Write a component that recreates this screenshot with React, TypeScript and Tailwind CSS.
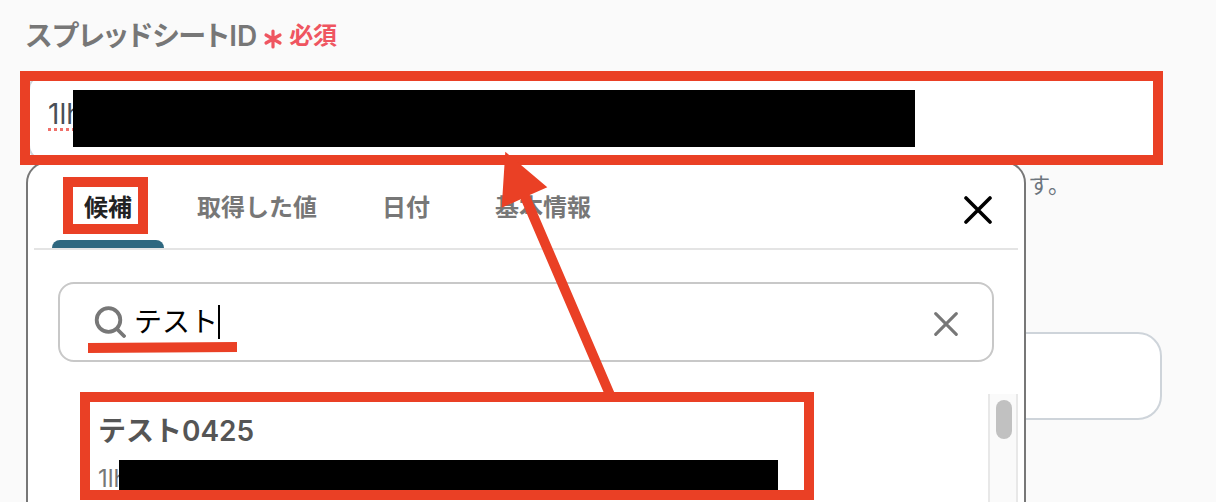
import { useState } from "react";

const tabs = ["候補", "取得した値", "日付", "基本情報"];

function Asterisk() {
  return (
    <svg className="mt-1.5 h-5 w-5 text-[#ef5560]" viewBox="0 0 20 20" aria-hidden="true">
      <path
        d="M10 2v16M3 6l14 8M17 6L3 14"
        fill="none"
        stroke="currentColor"
        strokeWidth="3.2"
        strokeLinecap="round"
      />
    </svg>
  );
}

function Cross({ className }: { className: string }) {
  return (
    <svg className={className} viewBox="0 0 28 28" aria-hidden="true">
      <path d="M2 2l24 24M26 2L2 26" fill="none" stroke="currentColor" strokeWidth="3.6" strokeLinecap="round" />
    </svg>
  );
}

function SearchIcon() {
  return (
    <svg className="h-8 w-8 shrink-0 text-[#777777]" viewBox="0 0 32 32" aria-hidden="true">
      <circle cx="14.5" cy="14" r="11.8" fill="none" stroke="currentColor" strokeWidth="3.8" />
      <path d="M23 23l7 7" stroke="currentColor" strokeWidth="3.8" strokeLinecap="round" />
    </svg>
  );
}

function Highlight({ className }: { className: string }) {
  return <div className={`pointer-events-none absolute border-[10px] border-[#ea4025] ${className}`} />;
}

function SuggestionPanel() {
  const [active, setActive] = useState(0);
  const [query, setQuery] = useState("テスト");

  return (
    <div className="absolute top-full right-[136px] -left-0.5 h-[420px] rounded-t-[22px] border-2 border-[#777777] bg-white">
      <div className="mx-1.5 flex h-[87px] items-stretch border-b-2 border-[#e4e4e4]">
        <div role="tablist" className="flex gap-px pl-[18px]">
          {tabs.map((tab, i) => (
            <button
              key={tab}
              type="button"
              role="tab"
              aria-selected={i === active}
              onClick={() => setActive(i)}
              className={`relative px-8 pt-1 text-2xl font-semibold whitespace-nowrap ${
                i === active ? "text-[#222222]" : "text-[#777777]"
              }`}
            >
              {tab}
              {i === active && <span className="absolute inset-x-0 bottom-0 h-2 rounded-t-lg bg-[#2f6880]" />}
              {i === 0 && <Highlight className="top-[14px] right-4 left-[11px] h-[57px]" />}
            </button>
          ))}
        </div>
        <button type="button" aria-label="閉じる" className="mt-2 mr-[26px] ml-auto text-black">
          <Cross className="h-7 w-7" />
        </button>
      </div>

      <div className="relative mx-[30px] mt-8 flex h-20 items-center rounded-2xl border-2 border-[#c8c8c8] pr-8 pl-[34px]">
        <SearchIcon />
        <input
          type="text"
          aria-label="候補を検索"
          value={query}
          onChange={(e) => setQuery(e.target.value)}
          className="ml-2 field-sizing-content bg-transparent text-[28px] text-black outline-none"
        />
        <span className="h-[34px] w-0.5 bg-black" />
        <button type="button" aria-label="クリア" onClick={() => setQuery("")} className="mt-1 ml-auto text-[#777777]">
          <Cross className="h-7 w-7 p-0.5" />
        </button>
        <svg className="pointer-events-none absolute top-[57px] left-7 h-3 w-[150px]" viewBox="0 0 150 12" aria-hidden="true">
          <path d="M0 7L149 6" stroke="#ea4025" strokeWidth="10" />
        </svg>
      </div>

      <div className="mt-8 mr-1.5 ml-[52px] flex h-[140px]">
        <ul className="flex-1">
          <li className="relative mr-[174px] pt-[17px] pl-[18px]">
            <a href="#result" className="block">
              <span className="block text-[28px] leading-10 font-semibold text-[#555555]">テスト0425</span>
              <span className="mt-3 block text-2xl leading-8 text-[#777777]">1lh</span>
            </a>
            <span className="absolute top-[66px] right-9 left-[39px] h-[34px] bg-black" />
            <Highlight className="inset-x-0 -top-0.5 h-[108px]" />
          </li>
        </ul>
        <div className="w-[30px] border-x-2 border-[#e8e8e8] bg-[#fafafa] pt-1.5 pr-1 pl-1.5">
          <div className="h-[39px] rounded-full bg-[#c1c1c1]" />
        </div>
      </div>
    </div>
  );
}

export default function App() {
  const [sheetId, setSheetId] = useState("1lh");

  return (
    <main
      lang="ja"
      className="relative h-screen overflow-hidden bg-[#fafafa] pt-5 pr-[54px] pl-7 font-['Inter','Noto_Sans_CJK_JP',sans-serif]"
    >
      <div className="-ml-0.5 flex h-8 items-center">
        <label
          htmlFor="sheet-id"
          className="text-[28px] font-semibold text-[#777777] [font-feature-settings:'palt']"
        >
          スプレッドシートID
        </label>
        <span className="ml-1.5 flex items-center gap-1.5 text-2xl font-semibold text-[#ef5560]">
          <Asterisk />
          必須
        </span>
      </div>

      <div className="relative z-10 mt-[22px]">
        <textarea
          id="sheet-id"
          rows={1}
          value={sheetId}
          onChange={(e) => setSheetId(e.target.value)}
          className="block h-[87px] w-full resize-none rounded-2xl border-2 border-[#ced4da] bg-white px-[18px] pt-[18px] text-[28px] leading-10 text-[#495057] underline decoration-[#f0706a] decoration-dotted decoration-[3px] underline-offset-4 outline-none"
        />
        <span className="absolute top-4 right-[247px] left-[45px] h-[57px] bg-black" />
        <SuggestionPanel />
        <Highlight className="-top-[3px] -right-px -bottom-1 -left-2" />
      </div>

      <p className="mt-2 pr-[92px] text-right text-[22px] leading-8 text-[#6c757d]">す。</p>

      <input
        type="text"
        aria-label="シート名"
        className="mt-[131px] block h-[88px] w-full rounded-3xl border-2 border-[#ced4da] bg-white px-[18px] text-[28px] outline-none"
      />

      <svg className="pointer-events-none absolute top-[150px] left-[500px] z-20 h-[250px] w-[120px]" viewBox="500 150 120 250" aria-hidden="true">
        <path d="M505.3 151.7L547.3 187.3L529.7 195L615 394H604.4L520.7 199.3L501.7 207.7Z" fill="#ea4025" />
      </svg>
    </main>
  );
}
